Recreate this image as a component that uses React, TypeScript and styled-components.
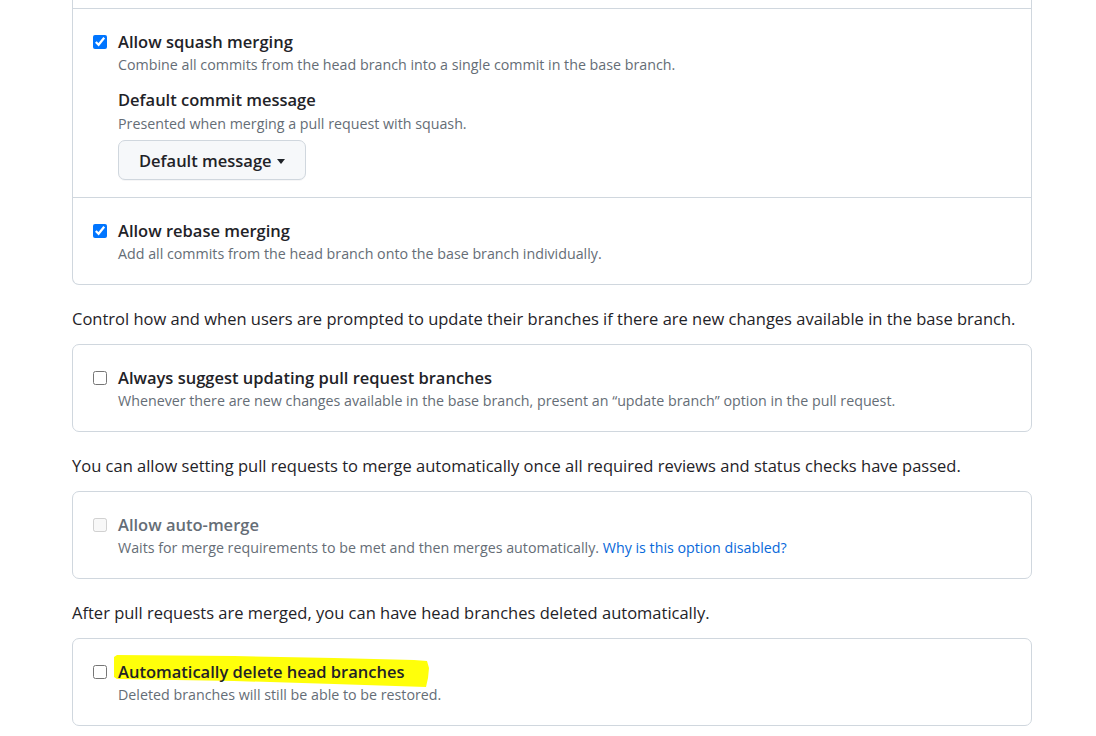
import React from "react";
import styled, { createGlobalStyle } from "styled-components";

const FONT = `"Segoe UI", "Open Sans", "Noto Sans", Arial, sans-serif`;

const GlobalStyle = createGlobalStyle`
  html, body { margin: 0; padding: 0; background: #ffffff; }
  body { font-family: ${FONT}; color: #1f2328; -webkit-font-smoothing: antialiased; }
`;

const Page = styled.div`
  width: 960px;
  padding: 0 64px 0 72px;
`;

const Box = styled.div<{ $cutTop?: boolean }>`
  border: 1px solid #d0d7de;
  border-radius: 7px;
  ${(p) =>
    p.$cutTop &&
    `border-top: none; border-top-left-radius: 0; border-top-right-radius: 0;`}
`;

const CutRow = styled.div`
  height: 8px;
`;

const Row = styled.div<{ $divided?: boolean }>`
  display: flex;
  align-items: flex-start;
  gap: 11px;
  padding: 20px 20px 19px 20px;
  ${(p) => p.$divided && `border-top: 1px solid #d0d7de;`}
`;

const TallRow = styled(Row)`
  padding-bottom: 17px;
`;

const Check = styled.input.attrs({ type: "checkbox" })`
  width: 14px;
  height: 14px;
  margin: 6px 0 0 0;
  flex: none;
`;

const TextCol = styled.div`
  display: flex;
  flex-direction: column;
  align-items: flex-start;
`;

const Title = styled.label<{ $disabled?: boolean }>`
  position: relative;
  font-size: 16.5px;
  font-weight: 600;
  line-height: 25px;
  color: ${(p) => (p.$disabled ? "#656d76" : "#1f2328")};
`;

const TitleText = styled.span`
  position: relative;
`;

const Note = styled.div`
  font-size: 14.25px;
  line-height: 22px;
  color: #656d76;
`;

const SubTitle = styled.div`
  margin-top: 11px;
  font-size: 16.5px;
  font-weight: 600;
  line-height: 25px;
  color: #1f2328;
`;

const SubNote = styled(Note)`
  margin-top: 1px;
`;

const Link = styled.a`
  color: #0969da;
  text-decoration: none;
`;

const MenuButton = styled.button`
  margin-top: 5px;
  display: inline-flex;
  align-items: center;
  gap: 5px;
  height: 40px;
  padding: 0 20px;
  background: #f6f8fa;
  border: 1px solid #d0d7de;
  border-radius: 7px;
  font-family: ${FONT};
  font-size: 16.5px;
  font-weight: 600;
  color: #1f2328;
  box-shadow: 0 1px 0 rgba(31, 35, 40, 0.04);
`;

const Caret = styled.span`
  width: 0;
  height: 0;
  border-left: 4.5px solid transparent;
  border-right: 4.5px solid transparent;
  border-top: 5px solid #1f2328;
  margin-top: 2px;
`;

const Para = styled.p`
  margin: 21px 0 12px;
  font-size: 16.5px;
  line-height: 26px;
  color: #1f2328;
`;

const Highlight = styled.svg`
  position: absolute;
  left: -4px;
  top: -4px;
  width: 316px;
  height: 33px;
  pointer-events: none;
`;

function Option({
  title,
  note,
  checked,
  disabled,
  divided,
  highlight,
}: {
  title: string;
  note: React.ReactNode;
  checked?: boolean;
  disabled?: boolean;
  divided?: boolean;
  highlight?: boolean;
}) {
  return (
    <Row $divided={divided}>
      <Check defaultChecked={checked} disabled={disabled} />
      <TextCol>
        <Title $disabled={disabled}>
          {highlight && (
            <Highlight viewBox="0 0 316 33" preserveAspectRatio="none">
              <path
                d="M0 2 L3 0 L120 1 L220 3 L300 5 L313 6 L315 13 L314 23 L312 32 L220 29 L120 26 L3 24 L0 22 Z"
                fill="#ffff0a"
              />
            </Highlight>
          )}
          <TitleText>{title}</TitleText>
        </Title>
        <Note>{note}</Note>
      </TextCol>
    </Row>
  );
}

export default function App() {
  return (
    <>
      <GlobalStyle />
      <Page>
        <Box $cutTop>
          <CutRow />
          <TallRow $divided>
            <Check defaultChecked />
            <TextCol>
              <Title>Allow squash merging</Title>
              <Note>
                Combine all commits from the head branch into a single commit in
                the base branch.
              </Note>
              <SubTitle>Default commit message</SubTitle>
              <SubNote>Presented when merging a pull request with squash.</SubNote>
              <MenuButton>
                Default message
                <Caret />
              </MenuButton>
            </TextCol>
          </TallRow>
          <Option
            divided
            checked
            title="Allow rebase merging"
            note="Add all commits from the head branch onto the base branch individually."
          />
        </Box>

        <Para>
          Control how and when users are prompted to update their branches if
          there are new changes available in the base branch.
        </Para>
        <Box>
          <Option
            title="Always suggest updating pull request branches"
            note="Whenever there are new changes available in the base branch, present an “update branch” option in the pull request."
          />
        </Box>

        <Para>
          You can allow setting pull requests to merge automatically once all
          required reviews and status checks have passed.
        </Para>
        <Box>
          <Option
            disabled
            title="Allow auto-merge"
            note={
              <>
                Waits for merge requirements to be met and then merges
                automatically. <Link href="#">Why is this option disabled?</Link>
              </>
            }
          />
        </Box>

        <Para>
          After pull requests are merged, you can have head branches deleted
          automatically.
        </Para>
        <Box>
          <Option
            highlight
            title="Automatically delete head branches"
            note="Deleted branches will still be able to be restored."
          />
        </Box>
      </Page>
    </>
  );
}
